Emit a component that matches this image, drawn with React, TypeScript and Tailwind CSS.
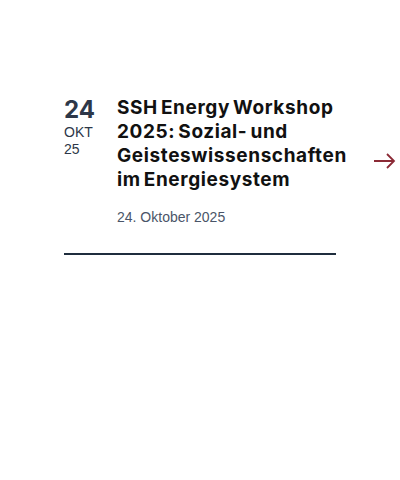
export default function App() {
  return (
    <div className="w-[400px] h-[480px] bg-white pt-[96px] pl-[64px]" style={{ fontFamily: "Inter, 'Liberation Sans', sans-serif" }}>
      <div className="flex items-start">
        {/* DATE */}
        <div className="w-[53px] shrink-0 flex flex-col">
          <span className="text-[24px] font-bold leading-[28px] text-[#2d3748]">24</span>
          <span className="text-[14px] leading-[17px] text-[#2d3748] font-['Liberation_Sans']">OKT</span>
          <span className="text-[14px] leading-[17px] text-[#2d3748] font-['Liberation_Sans']">25</span>
        </div>

        {/* TITLE */}
        <div className="w-[240px] shrink-0">
          <h3 className="text-[19px] font-bold leading-[24px] tracking-[0.6px] [word-spacing:-2px] text-[#111]">
            SSH Energy Workshop 2025: Sozial- und Geisteswissenschaften im Energiesystem
          </h3>
          <p className="mt-[15px] text-[14px] text-[#4a5568] font-['Liberation_Sans']">24. Oktober 2025</p>
        </div>

        {/* ARROW */}
        <div className="ml-[16px] mt-[57px] text-[#8b2a35]">
          <svg width="24" height="16" viewBox="0 0 24 16" fill="none" stroke="currentColor" strokeWidth="1.8">
            <path d="M1 8h20M14 1l7 7-7 7" />
          </svg>
        </div>
      </div>
      <div className="mt-[25px] w-[272px] h-[2px] bg-[#1f2d3d]" />
    </div>
  );
}
